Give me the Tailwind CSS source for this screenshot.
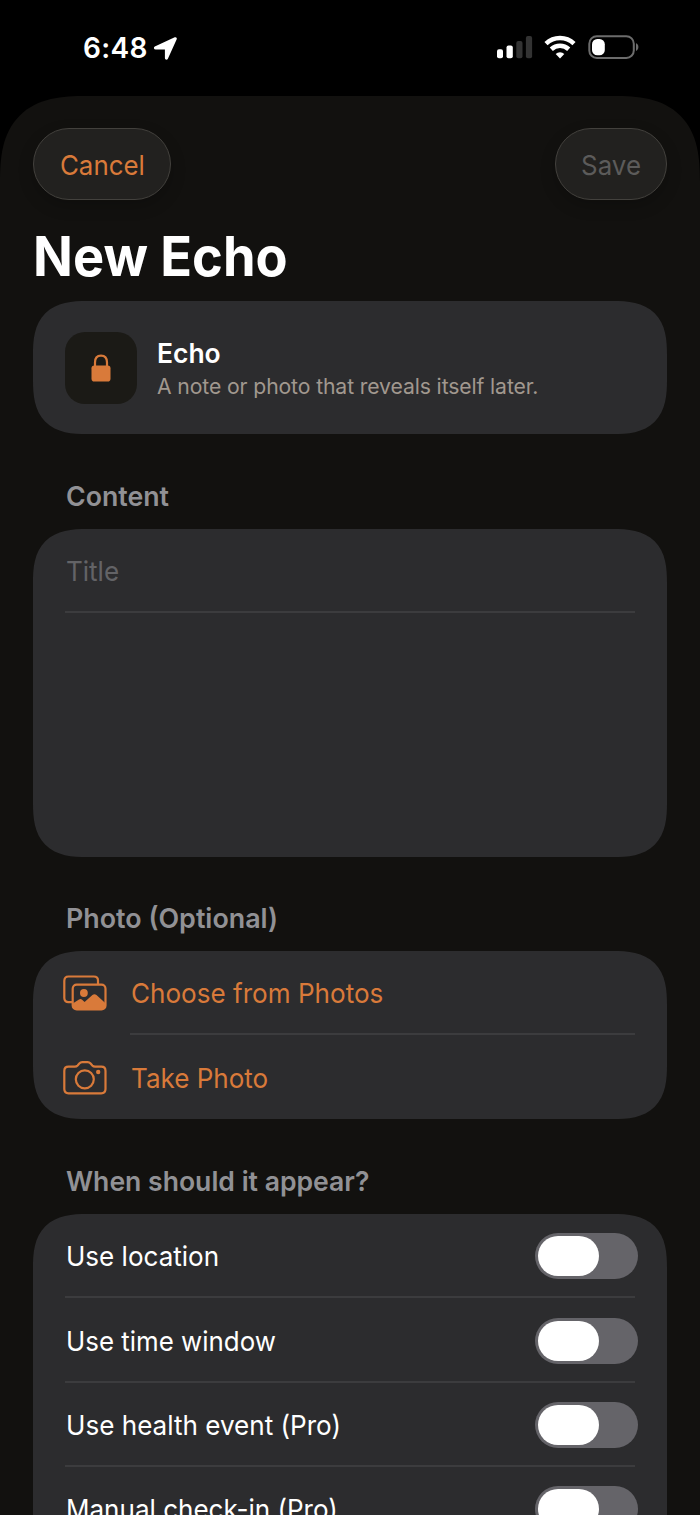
<!DOCTYPE html>
<html lang="en">
<head>
<meta charset="utf-8">
<title>New Echo</title>
<script src="https://cdn.jsdelivr.net/npm/@tailwindcss/browser@4"></script>
</head>
<body class="bg-black">
<div class="flex h-[1515px] w-[700px] flex-col overflow-hidden bg-black font-['Inter',sans-serif] text-[27.7px] leading-[34px] text-white">
  <header class="flex h-24 shrink-0 items-start justify-between pl-[83px] pr-[61px]">
    <div class="flex items-center pt-[31px]">
      <span class="text-[28px] font-semibold tracking-[0.3px]">6:48</span>
      <svg class="ml-[5px] h-[25px] w-[25px]" viewBox="0 0 25 25" fill="#fff"><path d="M1.800 10.400 21.700 1.300c1.500-.6 2.600.5 2 2L14.900 22.800c-.7 1.500-3 1.200-3-.7V13.400H2.700c-2 0-2.400-2.200-.9-3Z"/></svg>
    </div>
    <div class="flex items-center pt-[34px]">
      <svg class="h-[26px] w-[37px]" viewBox="0 0 37 26"><rect x="1" y="15.300" width="6" height="9" rx="2" fill="#fff"/><rect x="10.500" y="11.500" width="6.300" height="12.800" rx="2" fill="#fff"/><rect x="20.300" y="7" width="6.200" height="17.300" rx="2" fill="#333"/><rect x="29.900" y="2" width="6.200" height="22.300" rx="2" fill="#333"/></svg>
      <svg class="ml-[11px] h-[26px] w-[33px]" viewBox="0 0 33 26" fill="none" stroke="#fff" stroke-width="4.600"><path d="M2 9.600a20.500 20.500 0 0 1 28 0"/><path d="M7.300 15.200a12.800 12.800 0 0 1 17.400 0"/><path d="m16 24.400-4.300-4.300a5.900 5.900 0 0 1 8.600 0Z" fill="#fff" stroke="none"/></svg>
      <svg class="ml-[11px] h-[26px] w-[51px]" viewBox="0 0 51 26"><rect x="1.300" y="2.200" width="44.500" height="21.800" rx="7.500" fill="none" stroke="#6c6c6c" stroke-width="2"/><rect x="4" y="5" width="12.800" height="16.300" rx="5.300" fill="#fff"/><path d="M48 9.300c3.200 1 3.200 6.600 0 7.600Z" fill="#6c6c6c"/></svg>
    </div>
  </header>

  <main class="flex grow flex-col rounded-t-[86px] bg-[#12110f] px-[33px] pt-8 [corner-shape:superellipse(1.42)]">
    <div class="flex shrink-0 justify-between">
      <button class="flex h-[72px] w-[138px] items-center justify-center rounded-full border border-[#43413d] bg-[#22211f] pt-0.5 text-[#d97a3a] shadow-[0_6px_16px_rgba(0,0,0,0.2)]"><span class="scale-x-[0.935]">Cancel</span></button>
      <button class="flex h-[72px] w-[112px] items-center justify-center rounded-full border border-[#43413d] bg-[#22211f] pt-0.5 text-[#5c5b5a] shadow-[0_6px_16px_rgba(0,0,0,0.2)]"><span class="scale-x-[0.935]">Save</span></button>
    </div>
    <h1 class="mt-[23px] flex h-[66px] shrink-0 origin-left scale-x-[0.952] items-center text-[55px] font-bold whitespace-nowrap">New Echo</h1>

    <section class="mt-3 flex h-[133px] shrink-0 items-center rounded-[54px] bg-[#2c2c2e] pl-8 [corner-shape:superellipse(1.42)]">
      <div class="flex h-[72px] w-[72px] items-center justify-center rounded-[20px] bg-[#1b1a16]">
        <svg class="h-7 w-5" viewBox="0 0 20 28"><rect x=".500" y="11.500" width="19" height="16" rx="2.800" fill="#d97a3a"/><path d="M4 13V8.500C4 4 6.200 1.700 10 1.700s6 2.300 6 6.800V13" fill="none" stroke="#d97a3a" stroke-width="2.200"/></svg>
      </div>
      <div class="ml-5 flex flex-col pt-0.5">
        <p class="h-[34px] origin-left scale-x-[0.955] font-semibold">Echo</p>
        <p class="h-[32px] text-[21.2px] leading-8 tracking-[-0.12px] whitespace-nowrap text-[#a1988f]">A note or photo that reveals itself later.</p>
      </div>
    </section>

    <h2 class="mt-[45px] ml-[33px] h-[34px] shrink-0 origin-left scale-x-[0.965] font-semibold text-[#919195]">Content</h2>
    <section class="mt-4 h-[328px] shrink-0 rounded-[54px] bg-[#2c2c2e] px-8 [corner-shape:superellipse(1.42)]">
      <div class="flex h-[84px] items-center pl-px text-[#636366] shadow-[inset_0_-2px_0_#3c3c3e]"><span class="origin-left scale-x-[0.94]">Title</span></div>
    </section>

    <h2 class="mt-11 ml-[33px] h-[34px] shrink-0 origin-left scale-x-[0.970] font-semibold text-[#919195]">Photo (Optional)</h2>
    <section class="mt-4 flex h-[168px] shrink-0 flex-col rounded-[54px] bg-[#2c2c2e] pl-[30px] pr-8 text-[#d97a3a] [corner-shape:superellipse(1.42)]">
      <div class="flex h-[84px] items-center">
        <svg class="mb-px h-9 w-11 shrink-0" viewBox="0 0 44 36" fill="none" stroke="#d97a3a" stroke-width="2.200"><path d="M9 27.200H5.500C3 27.200 1.300 25.700 1.300 23V6C1.300 3.300 3 1.500 5.500 1.500h25.300C33.300 1.500 35 3 35 5.500V9.500"/><rect x="9.700" y="9.700" width="32.800" height="24.800" rx="4"/><circle cx="20.900" cy="18" r="3.900" fill="#d97a3a" stroke="none"/><path d="M9.700 28.500 16 24.600c1.200-.8 2-.8 3.100.1l2.500 2.200 7.800-6.800c1.400-1.200 2.700-1.200 4.100 0l9 8.200v2.500c0 2.600-1.500 3.700-4 3.700H13.700c-2.500 0-4-1.100-4-3.700Z" fill="#d97a3a" stroke="none"/></svg>
        <div class="ml-[23px] flex h-full grow items-center pl-px shadow-[inset_0_-2px_0_#3c3c3e]"><span class="origin-left scale-x-[0.942]">Choose from Photos</span></div>
      </div>
      <div class="flex h-[84px] items-center">
        <svg class="mt-px h-9 w-11 shrink-0" viewBox="0 0 44 36" fill="none" stroke="#d97a3a" stroke-width="2.200"><path d="M5.500 6.700h6.300c1.300 0 2-.3 2.800-1.200l1.700-2c.9-1 1.700-1.300 3-1.300h5.300c1.300 0 2.100.3 3 1.300l1.700 2c.8.9 1.500 1.200 2.800 1.200h6.200c2.700 0 4.200 1.500 4.200 4.200v18.200c0 2.700-1.500 4.200-4.200 4.200H5.500c-2.700 0-4.200-1.500-4.200-4.200V10.900c0-2.700 1.500-4.200 4.200-4.200Z"/><circle cx="21.800" cy="19.300" r="9"/><circle cx="35.200" cy="12" r="2.200" fill="#d97a3a" stroke="none"/></svg>
        <span class="ml-[24px] origin-left scale-x-[0.94] pt-0.5">Take Photo</span>
      </div>
    </section>

    <h2 class="mt-[45px] ml-[33px] h-[34px] shrink-0 origin-left scale-x-[0.960] font-semibold whitespace-nowrap text-[#919195]">When should it appear?</h2>
    <section class="mt-4 flex h-[400px] shrink-0 flex-col rounded-[54px] bg-[#2c2c2e] px-8 whitespace-nowrap [corner-shape:superellipse(1.42)]">
      <div class="flex h-[84.400px] shrink-0 items-center justify-between pl-px shadow-[inset_0_-2px_0_#3c3c3e]"><span class="origin-left scale-x-[0.940]">Use location</span><div class="-mr-[3px] h-[46px] w-[103px] rounded-full bg-[#656469] p-[3px]"><div class="h-10 w-[61px] rounded-full bg-white"></div></div></div>
      <div class="flex h-[84.400px] shrink-0 items-center justify-between pl-px shadow-[inset_0_-2px_0_#3c3c3e]"><span class="origin-left scale-x-[0.935] pt-px">Use time window</span><div class="-mr-[3px] h-[46px] w-[103px] rounded-full bg-[#656469] p-[3px]"><div class="h-10 w-[61px] rounded-full bg-white"></div></div></div>
      <div class="flex h-[84.400px] shrink-0 items-center justify-between pl-px shadow-[inset_0_-2px_0_#3c3c3e]"><span class="origin-left scale-x-[0.942] pt-px">Use health event (Pro)</span><div class="-mr-[3px] h-[46px] w-[103px] rounded-full bg-[#656469] p-[3px]"><div class="h-10 w-[61px] rounded-full bg-white"></div></div></div>
      <div class="flex h-[84.400px] shrink-0 items-center justify-between pl-px"><span class="origin-left scale-x-[0.940]">Manual check-in (Pro)</span><div class="-mr-[3px] h-[46px] w-[103px] rounded-full bg-[#656469] p-[3px]"><div class="h-10 w-[61px] rounded-full bg-white"></div></div></div>
    </section>
  </main>
</div>
</body>
</html>
